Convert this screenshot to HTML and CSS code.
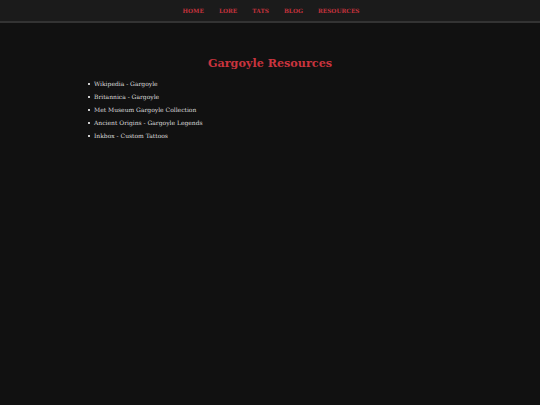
FILE: index.html
```html
<!DOCTYPE html>
<html>
<head>
<meta charset="utf-8">
<link rel="stylesheet" href="styles.css">
</head>
<body>
<nav class="nav">
  <a href="#">HOME</a>
  <a href="#">LORE</a>
  <a href="#">TATS</a>
  <a href="#">BLOG</a>
  <a href="#">RESOURCES</a>
</nav>
<main class="content">
  <h1 class="title">Gargoyle Resources</h1>
  <ul class="links">
    <li><a href="#">Wikipedia - Gargoyle</a></li>
    <li><a href="#">Britannica - Gargoyle</a></li>
    <li><a href="#">Met Museum Gargoyle Collection</a></li>
    <li><a href="#">Ancient Origins - Gargoyle Legends</a></li>
    <li><a href="#">Inkbox - Custom Tattoos</a></li>
  </ul>
</main>
</body>
</html>
```
FILE: styles.css
```css
html, body {
  margin: 0;
  padding: 0;
  background: #111111;
  height: 100%;
}
body {
  font-family: "DejaVu Serif", "Liberation Serif", serif;
  color: #dddddd;
}
.nav {
  background: #1b1b1b;
  border-bottom: 2px solid #333333;
  height: 21px;
  display: flex;
  justify-content: center;
  align-items: center;
  gap: 15px;
  padding-left: 2px;
}
.nav a {
  color: #c1323c;
  text-decoration: none;
  font-weight: bold;
  font-size: 5.8px;
}
.content {
  width: 380px;
  margin: 0 auto;
  padding-top: 33px;
}
.title {
  margin: 0 0 7px 0;
  text-align: center;
  color: #c9343e;
  font-size: 11.2px;
  font-weight: bold;
}
.links {
  margin: 0;
  padding-left: 8px;
  font-size: 6px;
  list-style: none;
}
.links li {
  line-height: 13px;
  display: flex;
  align-items: center;
  gap: 4px;
}
.links li::before {
  content: "";
  width: 2px;
  height: 2px;
  background: #cccccc;
}
.links a {
  color: #dddddd;
  text-decoration: none;
}
```
